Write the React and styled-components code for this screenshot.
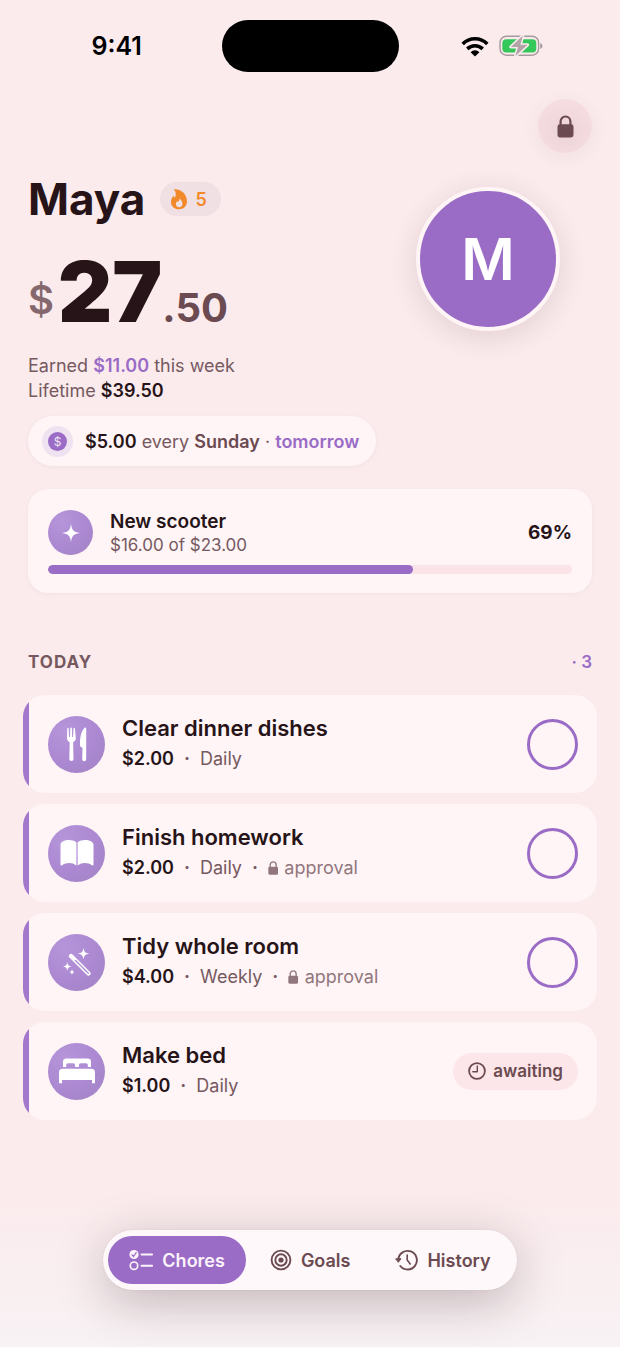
import styled, { createGlobalStyle, css } from 'styled-components';
import { useState } from 'react';

const GlobalStyle = createGlobalStyle`
	*, *::before, *::after {
		box-sizing: border-box;
	}
	body {
		margin: 0;
		background: #fbebed;
		font-family: Inter, "Liberation Sans", sans-serif;
		color: #271418;
	}
	h1, h2, h3, p, ul {
		margin: 0;
		padding: 0;
		font-weight: inherit;
	}
	button {
		font: inherit;
		color: inherit;
		border: 0;
		padding: 0;
		cursor: pointer;
	}
`;

const Page = styled.div`
	min-height: 100vh;
	display: flex;
	flex-direction: column;
	background: linear-gradient(to bottom, rgba(248, 242, 244, 0) calc(100% - 150px), #f8f2f4 100%), #fbebed;
`;

const StatusBar = styled.header`
	display: grid;
	grid-template-columns: 1fr 177px 1fr;
	align-items: center;
	padding: 20px 0 27px;
`;

const Clock = styled.time`
	justify-self: center;
	padding-left: 12px;
	font-size: 25px;
	line-height: 32px;
	font-weight: 600;
	color: #000;
`;

const Island = styled.div`
	height: 52px;
	border-radius: 26px;
	background: #000;
`;

const StatusIcons = styled.div`
	justify-self: center;
	display: flex;
	align-items: center;
	gap: 10px;
	padding-right: 14px;
`;

const Toolbar = styled.div`
	display: flex;
	justify-content: flex-end;
	padding: 0 28px;
`;

const LockButton = styled.button`
	width: 54px;
	height: 54px;
	border-radius: 50%;
	display: grid;
	place-items: center;
	color: #6b4a51;
	background: radial-gradient(circle at 50% 60%, #ebd3d7 0%, #f3dade 50%, #f7dfe3 100%);
	box-shadow: 0 4px 18px rgba(107, 74, 81, 0.07);
`;

const Main = styled.main`
	flex: 1;
	padding: 24px 28px 0;
`;

const Hero = styled.section`
	display: flex;
	justify-content: space-between;
	align-items: flex-start;
	padding-right: 32px;
`;

const NameRow = styled.div`
	display: flex;
	align-items: center;
	gap: 15px;
`;

const Name = styled.h1`
	font-size: 44px;
	line-height: 44px;
	font-weight: 700;
`;

const Streak = styled.span`
	display: flex;
	align-items: center;
	gap: 7px;
	height: 34px;
	padding: 0 14px 0 10px;
	border-radius: 17px;
	background: #f0dfe3;
	color: #f28a2b;
	font-size: 18px;
	font-weight: 600;
`;

const Balance = styled.p`
	display: flex;
	align-items: baseline;
	margin-top: 29px;
	font-weight: 700;
	color: #6b4a51;
	line-height: 84px;
`;

const Currency = styled.span`
	align-self: center;
	font-size: 40px;
	font-weight: 600;
	color: #84686e;
`;

const Dollars = styled.span`
	margin-left: 4px;
	font-size: 84px;
	font-weight: 900;
	color: #271418;
`;

const Cents = styled.span`
	font-size: 40px;
`;

const Avatar = styled.div`
	width: 144px;
	height: 144px;
	flex: none;
	margin-top: 10px;
	border: 4px solid #fff4f6;
	border-radius: 50%;
	display: grid;
	place-items: center;
	background: #9a6cc6;
	color: #fff;
	font-size: 58px;
	font-weight: 600;
	box-shadow: 0 6px 28px rgba(80, 40, 50, 0.14);
`;

const Summary = styled.p`
	margin-top: 3px;
	font-size: 18px;
	line-height: 25px;
	color: #765960;
`;

const Strong = styled.strong`
	font-weight: 600;
	color: ${(p) => p.$color || '#271418'};
`;

const Allowance = styled.div`
	display: inline-flex;
	align-items: center;
	gap: 12px;
	height: 50px;
	margin-top: 13px;
	padding: 0 17px 0 14px;
	border-radius: 25px;
	background: #fff4f6;
	box-shadow: 0 1px 4px rgba(107, 74, 81, 0.06);
	color: #765960;
	font-size: 18px;
`;

const Coin = styled.span`
	width: 31px;
	height: 31px;
	border-radius: 50%;
	display: grid;
	place-items: center;
	background: #efe2f1;

	span {
		width: 19px;
		height: 19px;
		border-radius: 50%;
		background: #9a6cc6;
		color: #efe2f1;
		font-size: 12px;
		line-height: 19px;
		text-align: center;
	}
`;

const GoalCard = styled.section`
	margin-top: 23px;
	padding: 20px 20px 19px;
	border-radius: 20px;
	background: #fff4f6;
	box-shadow: 0 1px 4px rgba(107, 74, 81, 0.05);
`;

const GoalRow = styled.div`
	display: flex;
	align-items: center;
	gap: 17px;
`;

const Bubble = styled.span`
	flex: none;
	width: ${(p) => p.$size}px;
	height: ${(p) => p.$size}px;
	border-radius: 50%;
	display: grid;
	place-items: center;
	color: #fff;
	background: radial-gradient(circle at 30% 25%, #b695da 0%, #ab88d1 55%, #a283c4 100%);
`;

const Grow = styled.div`
	flex: 1;
	min-width: 0;
`;

const GoalTitle = styled.h2`
	font-size: 19px;
	line-height: 25px;
	font-weight: 600;
`;

const GoalSub = styled.p`
	font-size: 17px;
	line-height: 22px;
	color: #765960;
`;

const Percent = styled.span`
	font-size: 19px;
	font-weight: 700;
`;

const Track = styled.div`
	height: 9px;
	margin-top: 9px;
	border-radius: 5px;
	background: #fae4e8;
	overflow: hidden;
`;

const Fill = styled.div`
	height: 100%;
	border-radius: 5px;
	background: #9a6cc6;
`;

const SectionHead = styled.div`
	display: flex;
	justify-content: space-between;
	align-items: center;
	margin-top: 57px;
	font-size: 17px;
	line-height: 25px;
	font-weight: 600;
	color: #9a6cc6;
`;

const SectionTitle = styled.h2`
	font-size: 17px;
	font-weight: 700;
	letter-spacing: 1px;
	color: #765960;
`;

const ChoreList = styled.ul`
	list-style: none;
	display: flex;
	flex-direction: column;
	gap: 11px;
	margin: 20px -5px 0;
`;

const ChoreRow = styled.li`
	display: flex;
	align-items: center;
	gap: 17px;
	height: 98px;
	padding: 0 19px 0 25px;
	border-radius: 22px;
	background: linear-gradient(to right, #a377cc 6px, #fff4f6 6px);
`;

const ChoreTitle = styled.h3`
	font-size: 22px;
	line-height: 30px;
	font-weight: 600;
`;

const ChoreMeta = styled.p`
	display: flex;
	align-items: center;
	gap: 10px;
	font-size: 18px;
	line-height: 32px;
	color: #765960;
`;

const Dot = styled.span`
	font-weight: 700;
`;

const Approval = styled.span`
	display: flex;
	align-items: center;
	gap: 6px;
	color: #91777d;
`;

const Check = styled.input`
	appearance: none;
	flex: none;
	width: 51px;
	height: 51px;
	margin: 0;
	border: 3px solid #9a6cc6;
	border-radius: 50%;
	cursor: pointer;

	&:checked {
		background: #9a6cc6;
	}
`;

const Awaiting = styled.span`
	display: flex;
	align-items: center;
	gap: 7px;
	height: 37px;
	padding: 0 15px;
	border-radius: 19px;
	background: #fce6e9;
	color: #6b4a51;
	font-size: 17px;
	font-weight: 600;
`;

const TabBar = styled.nav`
	align-self: center;
	display: flex;
	gap: 3px;
	margin: 80px 0 57px;
	padding: 6px 5px;
	border-radius: 30px;
	background: #fef8fa;
	box-shadow: 0 12px 50px rgba(50, 30, 35, 0.28), 0 0 2px rgba(50, 30, 35, 0.08);
`;

const Tab = styled.button`
	display: flex;
	align-items: center;
	gap: 9px;
	height: 48px;
	padding: 0 21px;
	border-radius: 24px;
	background: transparent;
	color: #6b4a51;
	font-size: 18px;
	font-weight: 600;

	${(p) => p.$active && css`
		background: #9a6cc6;
		color: #fdf3fb;
	`}
`;

const WifiIcon = () => (
	<svg width="28" height="21" viewBox="0 0 28 21" fill="none" stroke="#000" strokeWidth="3.6">
		<path d="M1.7 7.9a17.4 17.4 0 0 1 24.6 0" />
		<path d="M6.3 12.9a11 11 0 0 1 15.4 0" />
		<path d="M14 20.4l-4.4-4.2a6.200 6.200 0 0 1 8.800 0z" fill="#000" stroke="none" />
	</svg>
);

const BatteryIcon = () => (
	<svg width="44" height="24" viewBox="0 0 44 24">
		<rect x="1" y="2.2" width="38.6" height="19" rx="6.5" fill="none" stroke="#a59a9d" strokeWidth="1.4" />
		<path d="M41.2 9q2.300.8 2.300 3t-2.300 3z" fill="#a59a9d" />
		<rect x="3.3" y="5.2" width="34" height="13.200" rx="4" fill="#34c759" />
		<path d="M23.8 1.600L11.800 12.900h7.200l-2.600 9.200 12.200-11.300h-7.200z" fill="#b0a4a7" stroke="#fbebed" strokeWidth="3" strokeLinejoin="round" paintOrder="stroke" />
	</svg>
);

const LockIcon = ({ size = 23 }) => (
	<svg width={(size * 17) / 23} height={size} viewBox="0 0 17 23">
		<path d="M3.600 10V6.400a4.900 4.900 0 0 1 9.800 0V10" fill="none" stroke="currentColor" strokeWidth="2.200" />
		<rect x="0.5" y="9.3" width="16" height="13.2" rx="2.4" fill="currentColor" />
	</svg>
);

const FlameIcon = () => (
	<svg width="18" height="22" viewBox="0 0 18 22">
		<path fillRule="evenodd" fill="currentColor" d="M3.6 1.2C10.5.6 17 5.6 17 13.2c0 4.7-3.3 8-8 8s-8-3.1-8-7.3c0-3 1.5-4.700 2.400-6.200.5 1 .9 1.500 1.700 1.900C6.300 6.400 6 3.500 3.600 1.200zM9.300 10.400c.2 1.900-.5 2.700-1.300 3.600-.4-.3-.6-.6-.8-1.100-.8.9-1.300 1.900-1.300 3.100 0 2 1.400 3.300 3.300 3.300s3.300-1.300 3.300-3.200c0-2.600-1.600-4.400-3.200-5.700z" />
	</svg>
);

const SparkIcon = () => (
	<svg width="20" height="20" viewBox="0 0 20 20" fill="currentColor">
		<path d="M10 .5c.6 6.200 2.300 8.500 8.800 9.500-6.500 1-8.200 3.300-8.800 9.500-.6-6.200-2.300-8.500-8.800-9.500C7.700 9 9.400 6.700 10 .5z" />
	</svg>
);

const ForkKnifeIcon = () => (
	<svg width="24" height="36" viewBox="0 0 24 36" fill="currentColor">
		<path d="M2.3 2.5a.7.7 0 0 1 1.4 0l.4 8.500h.9l.3-8.700a.8.8 0 0 1 1.600 0l.3 8.700h.9l.4-8.500a.7.7 0 0 1 1.400 0l.9 9.700c.1 2-1.300 3.200-2.700 4.100l.4 16.700a2.100 2.100 0 0 1-4.200 0l.4-16.700c-1.400-.9-2.800-2.100-2.700-4.100z" />
		<path d="M21.200 3v30.300a2 2 0 0 1-4 0l.3-11.300-2.400-1.800c-.5-8.400 1-15 4.300-18.300.8-.8 1.800-.4 1.800 1.100z" />
	</svg>
);

const BookIcon = () => (
	<svg width="34" height="28" viewBox="0 0 34 28" fill="currentColor">
		<path d="M16.4 3.500v23c-4-3.300-10.500-3.300-14.300-.2-.7.5-1.600.3-1.600-.8V6C.5.6 12-.6 16.400 3.500z" />
		<path d="M17.600 3.500v23c4-3.300 10.500-3.300 14.300-.2.7.5 1.600.3 1.600-.8V6C33.500.6 22-.6 17.600 3.500z" />
	</svg>
);

const WandIcon = () => (
	<svg width="30" height="30" viewBox="0 0 30 30" fill="currentColor">
		<path d="M9 9l17.500 17.500" stroke="currentColor" strokeWidth="4.4" strokeLinecap="round" />
		<path d="M13.500 13.500l12.800 12.800" stroke="#ab88d1" strokeWidth="1.4" strokeLinecap="round" strokeDasharray="1.500 1" />
		<path d="M21.5 1c.7 4 1.700 5 6 5.700-4.300.7-5.300 1.700-6 5.700-.7-4-1.700-5-6-5.700 4.300-.7 5.300-1.700 6-5.700z" />
		<path d="M5.3 15.300c.6 2.900 1.400 3.700 4.300 4.300-2.900.6-3.700 1.400-4.300 4.300-.6-2.900-1.400-3.700-4.300-4.300 2.900-.6 3.700-1.400 4.300-4.300z" />
		<path d="M10 22.200c.4 1.900 1 2.500 2.900 2.900-1.900.4-2.500 1-2.900 2.900-.4-1.900-1-2.500-2.900-2.900 1.900-.4 2.500-1 2.900-2.900z" />
	</svg>
);

const BedIcon = () => (
	<svg width="38" height="26" viewBox="0 0 38 26" fill="currentColor">
		<path d="M5 9V4Q5 .6 8.400.6h21.200Q33 .6 33 4v5h-3.200V7q0-1.800-1.800-1.800h-5.200Q21 5.200 21 7v2h-4V7q0-1.800-1.800-1.800H10Q8.200 5.200 8.200 7v2z" />
		<path d="M1 25.200V14.500q0-3.700 3.700-3.700h28.600q3.700 0 3.700 3.700v10.700h-3V22H4v3.200z" />
	</svg>
);

const ClockIcon = () => (
	<svg width="18" height="18" viewBox="0 0 18 18" fill="none" stroke="currentColor">
		<circle cx="9" cy="9" r="7.9" strokeWidth="1.8" />
		<path d="M9.3 4v5.700H4.800" strokeWidth="1.4" strokeLinecap="round" strokeLinejoin="round" />
	</svg>
);

const ChecklistIcon = () => (
	<svg width="24" height="22" viewBox="0 0 24 22" fill="none" stroke="currentColor">
		<circle cx="5" cy="5.5" r="4.6" fill="currentColor" stroke="none" />
		<path d="M3 5.800l1.500 1.700 2.700-3.900" stroke="#9a6cc6" strokeWidth="1.2" strokeLinecap="round" />
		<circle cx="5" cy="16.7" r="3.7" strokeWidth="1.7" />
		<path d="M12.500 5.500h10.700M12.500 16.700h10.700" strokeWidth="1.9" strokeLinecap="round" />
	</svg>
);

const TargetIcon = () => (
	<svg width="22" height="22" viewBox="0 0 22 22" fill="none" stroke="currentColor" strokeWidth="1.9">
		<circle cx="11" cy="11" r="9.4" />
		<circle cx="11" cy="11" r="5.7" />
		<circle cx="11" cy="11" r="2.6" fill="currentColor" stroke="none" />
	</svg>
);

const HistoryIcon = () => (
	<svg width="23" height="22" viewBox="0 0 23 22" fill="none" stroke="currentColor" strokeWidth="1.9" strokeLinecap="round">
		<path d="M3.300 10.500A9.300 9.300 0 1 1 5.300 17" />
		<path d="M12.200 6v5l3 4" strokeWidth="1.6" />
		<path d="M1 9.800h5L3.500 13z" fill="currentColor" strokeWidth="1" strokeLinejoin="round" />
	</svg>
);

const chores = [
	{ id: 1, title: 'Clear dinner dishes', reward: '$2.00', repeat: 'Daily', Icon: ForkKnifeIcon },
	{ id: 2, title: 'Finish homework', reward: '$2.00', repeat: 'Daily', approval: true, Icon: BookIcon },
	{ id: 3, title: 'Tidy whole room', reward: '$4.00', repeat: 'Weekly', approval: true, Icon: WandIcon },
	{ id: 4, title: 'Make bed', reward: '$1.00', repeat: 'Daily', awaiting: true, Icon: BedIcon },
];

const tabs = [
	{ name: 'Chores', Icon: ChecklistIcon },
	{ name: 'Goals', Icon: TargetIcon },
	{ name: 'History', Icon: HistoryIcon },
];

const Chore = ({ chore }) => {
	const { title, reward, repeat, approval, awaiting, Icon } = chore;
	return (
		<ChoreRow>
			<Bubble $size={57}><Icon /></Bubble>
			<Grow>
				<ChoreTitle>{title}</ChoreTitle>
				<ChoreMeta>
					<Strong>{reward}</Strong>
					<Dot>·</Dot>
					<span>{repeat}</span>
					{approval && <Dot>·</Dot>}
					{approval && <Approval><LockIcon size={14} />approval</Approval>}
				</ChoreMeta>
			</Grow>
			{awaiting ? <Awaiting><ClockIcon />awaiting</Awaiting> : <Check type="checkbox" aria-label={title} />}
		</ChoreRow>
	);
};

const App = () => {
	const [tab, setTab] = useState('Chores');
	const saved = 16;
	const target = 23;

	return (
		<Page>
			<GlobalStyle />
			<StatusBar>
				<Clock>9:41</Clock>
				<Island />
				<StatusIcons><WifiIcon /><BatteryIcon /></StatusIcons>
			</StatusBar>
			<Toolbar>
				<LockButton aria-label="Lock"><LockIcon /></LockButton>
			</Toolbar>
			<Main>
				<Hero>
					<div>
						<NameRow>
							<Name>Maya</Name>
							<Streak><FlameIcon />5</Streak>
						</NameRow>
						<Balance>
							<Currency>$</Currency>
							<Dollars>27</Dollars>
							<Cents>.50</Cents>
						</Balance>
					</div>
					<Avatar>M</Avatar>
				</Hero>
				<Summary>
					Earned <Strong $color="#9a6cc6">$11.00</Strong> this week<br />
					Lifetime <Strong>$39.50</Strong>
				</Summary>
				<Allowance>
					<Coin><span>$</span></Coin>
					<span>
						<Strong>$5.00</Strong> every <Strong $color="#6b4a51">Sunday</Strong> · <Strong $color="#9a6cc6">tomorrow</Strong>
					</span>
				</Allowance>
				<GoalCard>
					<GoalRow>
						<Bubble $size={45}><SparkIcon /></Bubble>
						<Grow>
							<GoalTitle>New scooter</GoalTitle>
							<GoalSub>$16.00 of $23.00</GoalSub>
						</Grow>
						<Percent>69%</Percent>
					</GoalRow>
					<Track>
						<Fill style={{ width: `${(saved / target) * 100}%` }} />
					</Track>
				</GoalCard>
				<SectionHead>
					<SectionTitle>TODAY</SectionTitle>
					<span>· 3</span>
				</SectionHead>
				<ChoreList>
					{chores.map((chore) => <Chore key={chore.id} chore={chore} />)}
				</ChoreList>
			</Main>
			<TabBar>
				{tabs.map(({ name, Icon }) => (
					<Tab key={name} $active={tab === name} onClick={() => setTab(name)}>
						<Icon />{name}
					</Tab>
				))}
			</TabBar>
		</Page>
	);
};

export default App;
